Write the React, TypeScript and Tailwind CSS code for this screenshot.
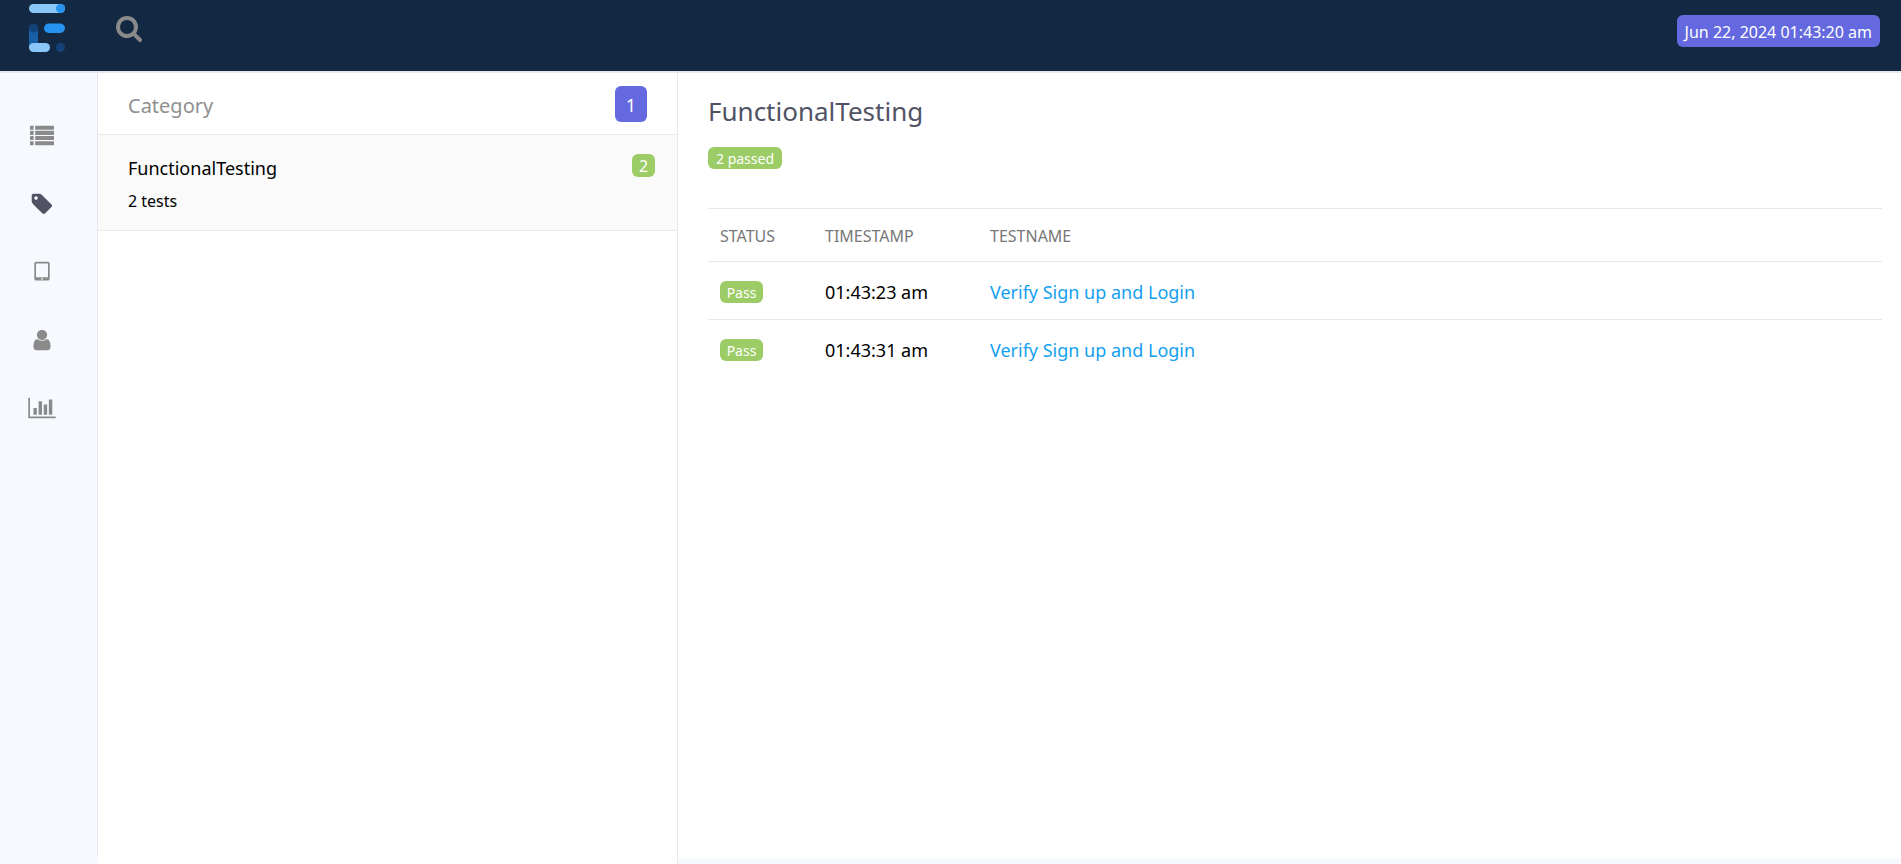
import type { ReactNode } from "react";

type IconProps = { children: ReactNode; label: string; wide?: boolean };

function NavIcon({ children, label, wide }: IconProps) {
  return (
    <svg
      role="img"
      aria-label={label}
      viewBox={wide ? "0 0 2048 1792" : "0 0 1792 1792"}
      fill="currentColor"
      className={wide ? "h-6 w-7" : "size-6"}
    >
      {children}
    </svg>
  );
}

const listRows = [128, 512, 896, 1280];

const navItems = [
  {
    label: "Tests",
    active: false,
    icon: (
      <NavIcon label="Tests">
        {listRows.map((y) => (
          <g key={y}>
            <rect x="0" y={y} width="272" height="300" rx="32" />
            <rect x="384" y={y} width="1408" height="300" rx="32" />
          </g>
        ))}
      </NavIcon>
    ),
  },
  {
    label: "Categories",
    active: true,
    icon: (
      <NavIcon label="Categories">
        <path d="M576 448q0-53-37.5-90.5t-90.5-37.5-90.5 37.5-37.5 90.5 37.5 90.5 90.5 37.5 90.5-37.5 37.5-90.5zm1067 576q0 53-37 90l-491 492q-39 37-91 37-53 0-90-37l-715-716q-38-37-64.5-101t-26.5-117v-416q0-52 38-90t90-38h416q53 0 117 26.5t102 64.5l715 714q37 39 37 91z" />
      </NavIcon>
    ),
  },
  {
    label: "Devices",
    active: false,
    icon: (
      <NavIcon label="Devices">
        <path d="M960 1408q0-26-19-45t-45-19-45 19-19 45 19 45 45 19 45-19 19-45zm384-160v-960q0-13-9.5-22.5t-22.5-9.5h-832q-13 0-22.5 9.5t-9.5 22.5v960q0 13 9.5 22.5t22.5 9.5h832q13 0 22.5-9.5t9.5-22.5zm128-960v1088q0 66-47 113t-113 47h-832q-66 0-113-47t-47-113v-1088q0-66 47-113t113-47h832q66 0 113 47t47 113z" />
      </NavIcon>
    ),
  },
  {
    label: "Authors",
    active: false,
    icon: (
      <NavIcon label="Authors">
        <path d="M1536 1399q0 109-62.5 187t-150.5 78h-854q-88 0-150.5-78t-62.5-187q0-85 8.5-160.5t31.5-152 58.5-131 94-89 134.5-34.5q131 128 313 128t313-128q76 0 134.5 34.5t94 89 58.5 131 31.5 152 8.5 160.5zm-256-887q0 159-112.5 271.5t-271.5 112.5-271.5-112.5-112.5-271.5 112.5-271.5 271.5-112.5 271.5 112.5 112.5 271.5z" />
      </NavIcon>
    ),
  },
  {
    label: "Dashboard",
    active: false,
    icon: (
      <NavIcon label="Dashboard" wide>
        <path d="M640 896v512h-256v-512h256zm384-512v1024h-256v-1024h256zm1024 1152v128h-2048v-1536h128v1408h1920zm-640-896v768h-256v-768h256zm384-384v1152h-256v-1152h256z" />
      </NavIcon>
    ),
  },
];

const tests = [
  { status: "Pass", time: "01:43:23 am", name: "Verify Sign up and Login" },
  { status: "Pass", time: "01:43:31 am", name: "Verify Sign up and Login" },
];

function Logo() {
  return (
    <svg viewBox="0 0 36 48" className="h-12 w-9" role="img" aria-label="Logo">
      <rect x="0" y="0" width="36" height="9" rx="4.5" fill="#8bc6f8" />
      <circle cx="31.5" cy="4.5" r="4.5" fill="#2693f1" />
      <path d="M0 24h9v19H0z" fill="#185fa6" />
      <circle cx="4.5" cy="24" r="4.5" fill="#14427a" />
      <rect x="15" y="19.5" width="21" height="9.5" rx="4.7" fill="#2693f1" />
      <rect x="0" y="39" width="21" height="9" rx="4.5" fill="#8bc6f8" />
      <circle cx="31.5" cy="43.5" r="4.5" fill="#14427a" />
    </svg>
  );
}

export default function App() {
  return (
    <div className="flex min-h-screen flex-col bg-[#f6faff] font-['Noto_Sans','Open_Sans',sans-serif] text-black">
      <header className="flex h-[73px] items-start border-b-2 border-[#e8e9ee] bg-[#132843] pr-[21px] pl-[29px]">
        <a href="#home" className="mt-1">
          <Logo />
        </a>
        <button type="button" aria-label="Search" className="mt-[14px] ml-[50px] text-[#8a8a8a]">
          <svg viewBox="0 0 1792 1792" fill="currentColor" className="size-7">
            <path d="M1216 832q0-185-131.5-316.5t-316.5-131.5-316.5 131.5-131.5 316.5 131.5 316.5 316.5 131.5 316.5-131.5 131.5-316.5zm512 832q0 52-38 90t-90 38q-54 0-90-38l-343-342q-179 124-399 124-143 0-273.5-55.5t-225-150-150-225-55.5-273.5 55.5-273.5 150-225 225-150 273.5-55.5 273.5 55.5 225 150 150 225 55.5 273.5q0 220-124 399l343 343q37 37 37 90z" />
          </svg>
        </button>
        <span className="mt-[15px] ml-auto h-8 rounded-md bg-[#6469df] px-2 text-base leading-[34px] text-white">
          Jun 22, 2024 01:43:20 am
        </span>
      </header>

      <div className="flex flex-1">
        <nav className="mb-2 w-[98px] shrink-0 border-r border-[#e5e8ed] pt-[29px] pr-[13px]">
          <ul>
            {navItems.map((item) => (
              <li key={item.label}>
                <a
                  href={`#${item.label.toLowerCase()}`}
                  className={`flex h-[68px] items-center justify-center ${item.active ? "text-[#515365]" : "text-[#8a8a8a]"}`}
                >
                  {item.icon}
                </a>
              </li>
            ))}
          </ul>
        </nav>

        <section className="w-[580px] shrink-0 border-r border-[#e8e8ea] bg-white">
          <div className="flex h-[62px] items-center justify-between border-b border-[#e8e8ea] pr-[30px] pl-[30px]">
            <h2 className="pt-1 text-xl text-[#8f8f8f]">Category</h2>
            <span className="h-9 w-8 rounded-md bg-[#6469df] text-center text-lg leading-[38px] text-white">1</span>
          </div>
          <ul>
            <li className="flex h-24 items-start justify-between border-b border-[#e8e8ea] bg-[#fafafa] pr-[22px] pl-[30px]">
              <div className="pt-[19px]">
                <p className="text-lg leading-7">FunctionalTesting</p>
                <p className="mt-[5px] text-base leading-7">2 tests</p>
              </div>
              <span className="mt-[19px] h-[23px] w-[23px] rounded-md bg-[#9ccc65] text-center text-base leading-6 text-white">
                2
              </span>
            </li>
          </ul>
        </section>

        <main className="mb-[6px] flex-1 bg-white pr-[19px] pl-[30px]">
          <h1 className="pt-[18px] text-[26px] leading-10 text-[#515365]">FunctionalTesting</h1>
          <span className="mt-4 block h-[22px] w-[74px] rounded-md bg-[#9ccc65] text-center text-sm leading-6 text-white">
            2 passed
          </span>
          <table className="mt-[39px] w-full table-fixed border-collapse border-t border-[#e8e8ea] text-left">
            <colgroup>
              <col className="w-[105px]" />
              <col className="w-[165px]" />
              <col />
            </colgroup>
            <thead>
              <tr className="h-[53px] border-b border-[#e8e8ea] text-base text-[#777]">
                <th className="pt-[2px] pl-3 font-normal">STATUS</th>
                <th className="pt-[2px] pl-3 font-normal">TIMESTAMP</th>
                <th className="pt-[2px] pl-3 font-normal">TESTNAME</th>
              </tr>
            </thead>
            <tbody>
              {tests.map((test) => (
                <tr key={test.time} className="h-[58px] border-b border-[#e8e8ea] text-lg last:border-b-0">
                  <td className="pt-[2px] pl-3">
                    <span className="block h-[22px] w-[43px] rounded-md bg-[#9ccc65] text-center text-sm leading-6 text-white">
                      {test.status}
                    </span>
                  </td>
                  <td className="pt-[2px] pl-3">{test.time}</td>
                  <td className="pt-[2px] pl-3">
                    <a href="#test" className="text-[#139ff0]">
                      {test.name}
                    </a>
                  </td>
                </tr>
              ))}
            </tbody>
          </table>
        </main>
      </div>
    </div>
  );
}
